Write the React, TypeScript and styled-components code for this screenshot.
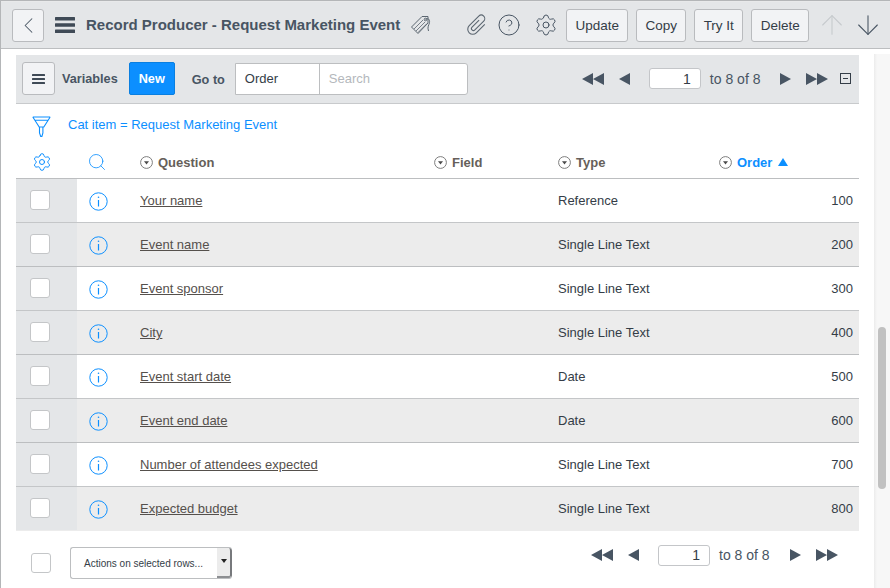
import { FC } from "react";
import styled, { createGlobalStyle } from "styled-components";
import { ChevronLeft, ArrowUp, ArrowDown, CircleHelp, Settings, Search } from "lucide-react";

const GlobalStyle = createGlobalStyle`
  html, body {
    margin: 0;
    padding: 0;
    background: #fff;
  }
  body {
    width: 890px;
    height: 588px;
    overflow: hidden;
    font-family: "Liberation Sans", Arial, sans-serif;
    color: #343d47;
  }
  * {
    box-sizing: border-box;
  }
`;

const Page = styled.div`
  width: 890px;
  height: 588px;
  display: flex;
  flex-direction: column;
  border-left: 1px solid #b4b6b8;
  border-top: 1px solid #b4b6b8;
`;

const Header = styled.header`
  height: 48px;
  flex: none;
  display: flex;
  align-items: center;
  background: #e4e6e8;
  border-top: 1px solid #e8e9ea;
  border-bottom: 1px solid #bcbec0;
  padding-left: 11px;
`;

const HeaderTitle = styled.h1`
  margin: 0 0 2px 11px;
  font-size: 15px;
  font-weight: 700;
  color: #485563;
  white-space: nowrap;
`;

const Btn = styled.button<{ $w: number; $ml?: number }>`
  width: ${(p) => p.$w}px;
  height: 33px;
  margin-left: ${(p) => p.$ml ?? 0}px;
  flex: none;
  display: flex;
  align-items: center;
  justify-content: center;
  padding: 0;
  background: #f2f3f5;
  border: 1px solid #b9bbbe;
  border-radius: 3px;
  font-family: inherit;
  font-size: 13.5px;
  color: #343d47;
`;

const IconSlot = styled.span<{ $ml: number; $color?: string }>`
  display: flex;
  flex: none;
  margin-left: ${(p) => p.$ml}px;
  color: ${(p) => p.$color ?? "#485563"};
`;

const Body = styled.div`
  flex: 1;
  min-height: 0;
  display: flex;
`;

const Main = styled.main`
  width: 873px;
  flex: none;
  padding: 6px 0 0 15px;
  display: flex;
  flex-direction: column;
`;

const ListBar = styled.div`
  width: 843px;
  height: 49px;
  flex: none;
  display: flex;
  align-items: center;
  background: #e4e6e8;
  border-bottom: 1px solid #c8cacc;
  padding: 0 6px 1px;
`;

const BarLabel = styled.span<{ $ml: number; $low?: boolean }>`
  margin-left: ${(p) => p.$ml}px;
  margin-top: ${(p) => (p.$low ? 2 : 0)}px;
  font-size: 12.7px;
  font-weight: 700;
  color: #485563;
`;

const NewButton = styled.button`
  width: 46px;
  height: 33px;
  margin-left: 11px;
  padding: 0;
  background: #0c8fff;
  border: 1px solid #0a7fe0;
  border-radius: 2px;
  color: #fff;
  font-family: inherit;
  font-size: 12.7px;
  font-weight: 700;
`;

const SearchGroup = styled.div`
  display: flex;
  height: 32px;
  margin-left: 10px;
  background: #fff;
  border: 1px solid #bcbec0;
  border-radius: 0 3px 3px 0;
`;

const OrderField = styled.div`
  width: 84px;
  display: flex;
  align-items: center;
  padding-left: 9px;
  font-size: 13px;
  color: #343d47;
  border-right: 1px solid #bcbec0;
`;

const SearchField = styled.div`
  width: 147px;
  display: flex;
  align-items: center;
  padding-left: 9px;
  font-size: 13px;
  color: #b4b8bc;
`;

const Pager = styled.div<{ $ml: number; $raised?: boolean }>`
  display: flex;
  align-items: center;
  margin-left: ${(p) => p.$ml}px;
  margin-bottom: ${(p) => (p.$raised ? 16 : 0)}px;
`;

const PageInput = styled.div`
  width: 52px;
  height: 21px;
  margin: 0 9px 0 19px;
  padding-right: 9px;
  display: flex;
  align-items: center;
  justify-content: flex-end;
  background: #fff;
  border: 1px solid #c4c6c9;
  border-radius: 3px;
  font-size: 14px;
  color: #343d47;
`;

const PageText = styled.span`
  font-size: 14px;
  color: #485563;
  white-space: nowrap;
  margin-right: 20px;
`;

const Collapse = styled.span`
  width: 11px;
  height: 11px;
  margin-left: 12px;
  display: flex;
  align-items: center;
  justify-content: center;
  border: 1px solid #343d47;
  &::after {
    content: "";
    width: 5px;
    height: 1px;
    background: #343d47;
  }
`;

const FilterRow = styled.div`
  height: 42px;
  flex: none;
  display: flex;
  align-items: center;
  padding: 0 0 2px 16px;
  font-size: 13px;
  color: #0c8fff;
  gap: 17px;
`;

const FunnelSlot = styled.span`
  display: flex;
  margin-top: 5px;
`;

const Table = styled.div`
  width: 843px;
  flex: none;
  display: flex;
  flex-direction: column;
`;

const columns = "61px 63px 294px 124px 161px 1fr";

const HeadRow = styled.div`
  height: 33px;
  display: grid;
  grid-template-columns: ${columns};
  align-items: center;
  border-bottom: 1px solid #bcbec0;
`;

const HeadIcon = styled.div<{ $ml: number }>`
  display: flex;
  padding-left: ${(p) => p.$ml}px;
  color: #0c8fff;
`;

const HeadCell = styled.div<{ $active?: boolean }>`
  display: flex;
  align-items: center;
  gap: 5px;
  font-size: 13px;
  font-weight: 700;
  color: ${(p) => (p.$active ? "#0c8fff" : "#665f5a")};
`;

const Row = styled.div<{ $alt: boolean }>`
  height: 44px;
  display: grid;
  grid-template-columns: ${columns};
  align-items: center;
  background: ${(p) => (p.$alt ? "#ececec" : "#fff")};
  border-bottom: 1px solid ${(p) => (p.$alt ? "#bcbec0" : "#c4c6c8")};

  &:last-child {
    border-bottom-color: #ececec;
  }
`;

const CheckCell = styled.div`
  height: 100%;
  display: flex;
  align-items: center;
  padding: 0 0 1px 14px;
  background: #e4e6e8;
`;

const Check = styled.span`
  width: 20px;
  height: 20px;
  flex: none;
  display: block;
  background: #fff;
  border: 1px solid #c4c6c8;
  border-radius: 3px;
`;

const InfoCell = styled.div`
  display: flex;
  padding: 1px 0 0 12px;
`;

const QuestionLink = styled.a`
  display: block;
  font-size: 13px;
  color: #55504c;
  text-decoration: underline;
`;

const TypeCell = styled.div`
  grid-column: 5;
  font-size: 13px;
  color: #343d47;
`;

const OrderCell = styled.div`
  text-align: right;
  padding-right: 6px;
  font-size: 13px;
  color: #343d47;
`;

const Footer = styled.div`
  height: 64px;
  flex: none;
  display: flex;
  align-items: center;
  padding-left: 15px;
`;

const ActionSelect = styled.div`
  width: 162px;
  height: 32px;
  margin-left: 19px;
  display: flex;
  align-items: stretch;
  background: #fff;
  border: 1px solid #bcbec0;
  border-right: none;
  border-radius: 3px;
  font-size: 10px;
  color: #343d47;
`;

const ActionText = styled.span`
  flex: 1;
  display: flex;
  align-items: center;
  padding-left: 13px;
`;

const ActionArrow = styled.span`
  width: 15px;
  display: flex;
  align-items: center;
  justify-content: center;
  background: #ececec;
  border-right: 2px solid #77797c;
  border-bottom: 2px solid #8d8f92;
  border-radius: 0 3px 3px 0;
  &::after {
    content: "";
    border-left: 3px solid transparent;
    border-right: 3px solid transparent;
    border-top: 4px solid #222;
    margin-bottom: 3px;
  }
`;

const ScrollTrack = styled.aside`
  width: 16px;
  flex: none;
  margin-top: 5px;
  background: linear-gradient(to right, #ececec 0, #f7f7f7 3px, #f7f7f7 100%);
`;

const ScrollThumb = styled.div`
  width: 8px;
  height: 162px;
  margin: 273px 4px 0;
  background: #c1c1c1;
  border-radius: 4px;
`;

const Svg = styled.svg`
  display: block;
  flex: none;
`;

const Burger: FC<{ w: number; h: number; bar: number }> = ({ w, h, bar }) => (
  <Svg width={w} height={h} viewBox={`0 0 ${w} ${h}`} fill="#3f4a56">
    <rect width={w} height={bar} y={0} rx={0.5} />
    <rect width={w} height={bar} y={(h - bar) / 2} rx={0.5} />
    <rect width={w} height={bar} y={h - bar} rx={0.5} />
  </Svg>
);

const TagIcon: FC = () => (
  <Svg width={22} height={20} viewBox="0 0 22 20" fill="none" stroke="#5b6670" strokeWidth={1}>
    <path d="M1.5 12 12 1.5h6V8L8 18.5z" />
    <path d="M4 14 13 5M6 16 15 7M8 17.5 17 8.5" strokeWidth={0.8} />
    <circle cx={15.5} cy={4.5} r={1.3} />
    <path d="M15.5 4.5c2.5-2 4.5 0 4 3s-2.5 4-1 8.5" />
  </Svg>
);

const ClipIcon: FC = () => (
  <Svg width={24} height={24} viewBox="0 0 24 24" fill="none" stroke="#5b6670" strokeWidth={1.1}>
    <path
      transform="rotate(45 12 12)"
      d="M10 7v10a2 2 0 0 0 4 0V4.5a3.5 3.5 0 0 0-7 0V18a5 5 0 0 0 10 0V6"
    />
  </Svg>
);

const Triangle: FC<{ dir: "left" | "right"; double?: boolean }> = ({ dir, double }) => (
  <Svg width={double ? 22 : 11} height={12} viewBox={double ? "0 0 22 12" : "0 0 11 12"} fill="#485563">
    {dir === "left" ? (
      double ? <path d="M0 6 11 0v12zM11 6 22 0v12z" /> : <path d="M0 6 11 0v12z" />
    ) : double ? (
      <path d="M0 0 11 6 0 12zM11 0 22 6 11 12z" />
    ) : (
      <path d="M0 0 11 6 0 12z" />
    )}
  </Svg>
);

const Spaced = styled.span<{ $ml: number }>`
  display: flex;
  flex: none;
  margin-left: ${(p) => p.$ml}px;
`;

const FunnelIcon: FC = () => (
  <Svg width={19} height={21} viewBox="0 0 19 21" fill="none" stroke="#0c8fff" strokeWidth={1.1}>
    <path d="M.8 1h17.4M.8 1l6.4 10h4.6l6.4-10M3 4.2h13" />
    <path d="M7.5 11v6l1.2 3.4h1.2l1-3.4v-6" />
  </Svg>
);

const InfoIcon: FC = () => (
  <Svg width={19} height={19} viewBox="0 0 19 19" fill="none" stroke="#0c8fff" strokeWidth={1}>
    <circle cx={9.5} cy={9.5} r={8.7} />
    <path d="M9.5 8v6.5" strokeWidth={1.2} />
    <circle cx={9.5} cy={5.2} r={0.8} fill="#0c8fff" stroke="none" />
  </Svg>
);

const SortIcon: FC = () => (
  <Svg width={13} height={13} viewBox="0 0 13 13" fill="none">
    <circle cx={6.5} cy={6.5} r={5.9} stroke="#6f6f6f" strokeWidth={0.9} />
    <path d="M4 5.2h5L6.5 8.6z" fill="#4a4a4a" />
  </Svg>
);

const rows = [
  { question: "Your name", type: "Reference", order: 100 },
  { question: "Event name", type: "Single Line Text", order: 200 },
  { question: "Event sponsor", type: "Single Line Text", order: 300 },
  { question: "City", type: "Single Line Text", order: 400 },
  { question: "Event start date", type: "Date", order: 500 },
  { question: "Event end date", type: "Date", order: 600 },
  { question: "Number of attendees expected", type: "Single Line Text", order: 700 },
  { question: "Expected budget", type: "Single Line Text", order: 800 },
];

const PagerControls: FC = () => (
  <>
    <Triangle dir="left" double />
    <Spaced $ml={15}>
      <Triangle dir="left" />
    </Spaced>
    <PageInput>1</PageInput>
    <PageText>to 8 of 8</PageText>
    <Triangle dir="right" />
    <Spaced $ml={15}>
      <Triangle dir="right" double />
    </Spaced>
  </>
);

const App: FC = () => (
  <Page>
    <GlobalStyle />
    <Header>
      <Btn $w={32}>
        <ChevronLeft size={27} strokeWidth={0.9} color="#485563" />
      </Btn>
      <Spaced $ml={11}>
        <Burger w={20} h={16} bar={3.4} />
      </Spaced>
      <HeaderTitle>Record Producer - Request Marketing Event</HeaderTitle>
      <Spaced $ml={10}>
        <TagIcon />
      </Spaced>
      <Spaced $ml={33}>
        <ClipIcon />
      </Spaced>
      <IconSlot $ml={8}>
        <CircleHelp size={24} strokeWidth={1} />
      </IconSlot>
      <IconSlot $ml={13}>
        <Settings size={24} strokeWidth={1} />
      </IconSlot>
      <Btn $w={62} $ml={8}>Update</Btn>
      <Btn $w={50} $ml={8}>Copy</Btn>
      <Btn $w={49} $ml={8}>Try It</Btn>
      <Btn $w={58} $ml={8}>Delete</Btn>
      <IconSlot $ml={7} $color="#c6cacd">
        <ArrowUp size={32} strokeWidth={0.8} />
      </IconSlot>
      <IconSlot $ml={4}>
        <ArrowDown size={32} strokeWidth={0.8} />
      </IconSlot>
    </Header>
    <Body>
      <Main>
        <ListBar>
          <Btn $w={33}>
            <Burger w={13} h={10} bar={2} />
          </Btn>
          <BarLabel $ml={7}>Variables</BarLabel>
          <NewButton>New</NewButton>
          <BarLabel $ml={17} $low>Go to</BarLabel>
          <SearchGroup>
            <OrderField>Order</OrderField>
            <SearchField>Search</SearchField>
          </SearchGroup>
          <Pager $ml={114}>
            <PagerControls />
            <Collapse />
          </Pager>
        </ListBar>
        <FilterRow>
          <FunnelSlot>
            <FunnelIcon />
          </FunnelSlot>
          <span>Cat item = Request Marketing Event</span>
        </FilterRow>
        <Table>
          <HeadRow>
            <HeadIcon $ml={16}>
              <Settings size={20} strokeWidth={1.2} />
            </HeadIcon>
            <HeadIcon $ml={10}>
              <Search size={20} strokeWidth={1} />
            </HeadIcon>
            <HeadCell><SortIcon />Question</HeadCell>
            <HeadCell><SortIcon />Field</HeadCell>
            <HeadCell><SortIcon />Type</HeadCell>
            <HeadCell $active>
              <SortIcon />Order
              <Spaced $ml={1}>
                <Svg width={10} height={8} viewBox="0 0 10 8" fill="#0c8fff">
                  <path d="M5 0 10 8H0z" />
                </Svg>
              </Spaced>
            </HeadCell>
          </HeadRow>
          {rows.map((r, i) => (
            <Row key={r.order} $alt={i % 2 === 1}>
              <CheckCell>
                <Check />
              </CheckCell>
              <InfoCell>
                <InfoIcon />
              </InfoCell>
              <QuestionLink>{r.question}</QuestionLink>
              <TypeCell>{r.type}</TypeCell>
              <OrderCell>{r.order}</OrderCell>
            </Row>
          ))}
        </Table>
        <Footer>
          <Check />
          <ActionSelect>
            <ActionText>Actions on selected rows...</ActionText>
            <ActionArrow />
          </ActionSelect>
          <Pager $ml={359} $raised>
            <PagerControls />
          </Pager>
        </Footer>
      </Main>
      <ScrollTrack>
        <ScrollThumb />
      </ScrollTrack>
    </Body>
  </Page>
);

export default App;
